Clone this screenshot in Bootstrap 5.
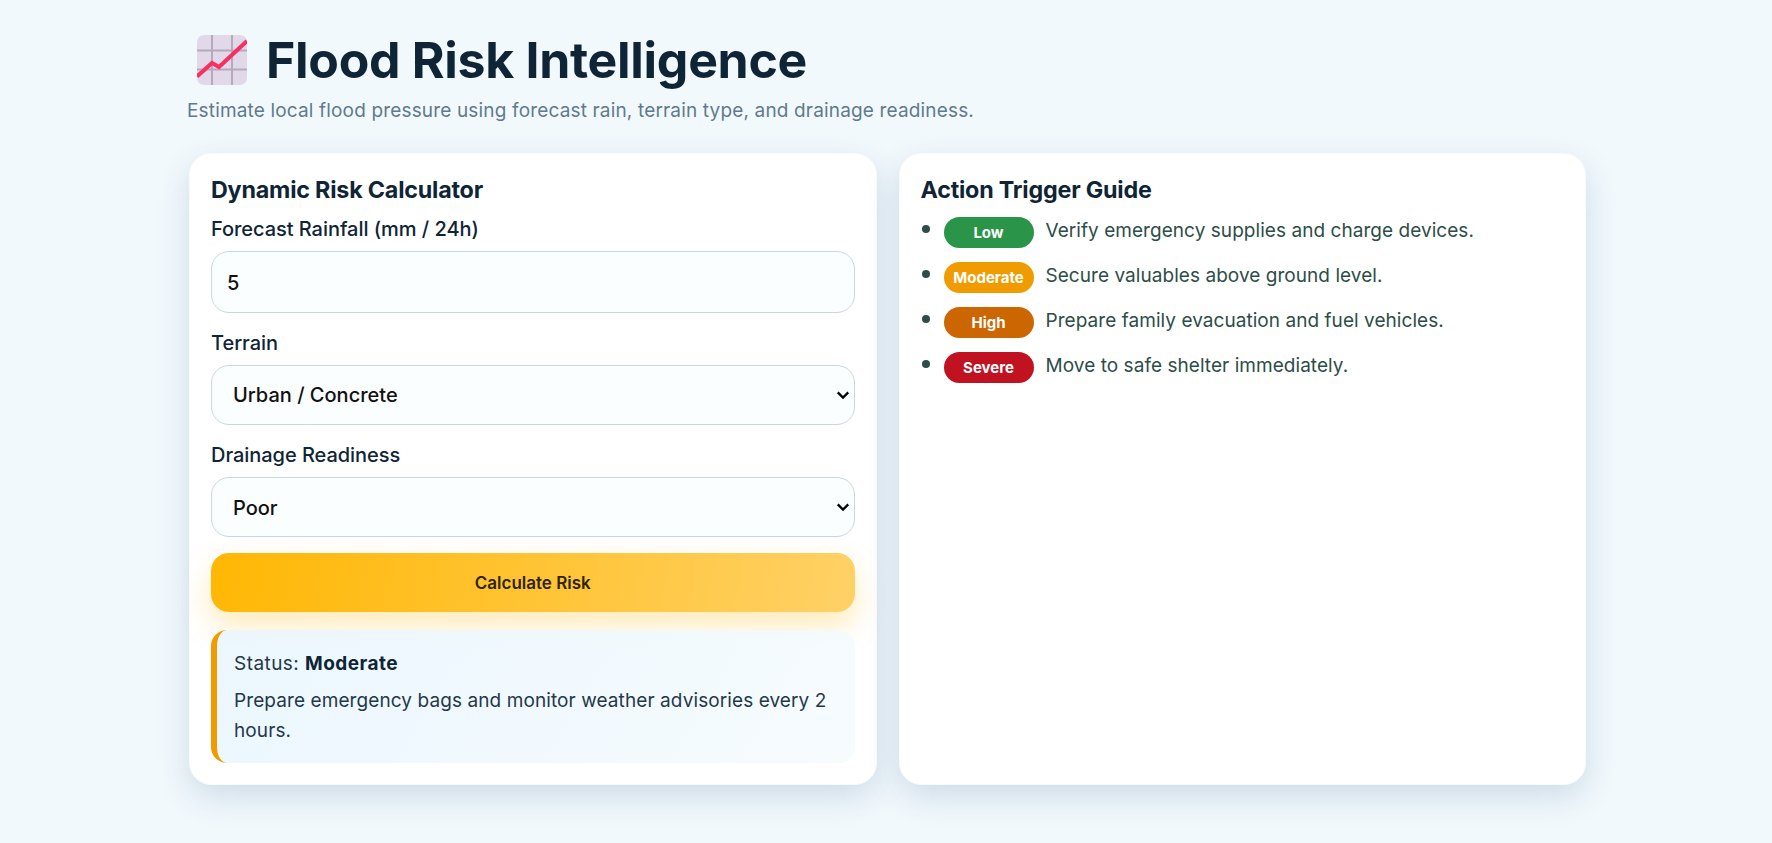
<!doctype html>
<html lang="en"><head><meta charset="utf-8"><title>Flood Risk Intelligence</title>
<link href="https://cdn.jsdelivr.net/npm/bootstrap@5.3.0/dist/css/bootstrap.min.css" rel="stylesheet">
<style>
html,body{height:100%}
body{font-family:Inter,"Noto Sans",sans-serif;color:#0f2536;background:#f2f9fd;overflow:hidden}
.shell{width:1400px;margin:0 auto;padding-top:26px}
.hero-title{font-size:50px;font-weight:700;line-height:68px;color:#0f2536;margin:0;letter-spacing:-.3px;padding-left:11px;gap:19px}
.hero-sub{font-size:19px;line-height:28px;color:#5f7a8e;margin:3px 0 28px 1px;letter-spacing:.16px}
.panels{gap:22px;padding-left:3px}
.panel{width:688px;height:632px;background:#fff;border-radius:22px;padding:21px;box-shadow:0 12px 32px rgba(20,70,110,.16);border:1px solid #f8fbfd}
.panel-title{font-size:23.3px;font-weight:700;line-height:30px;margin:0 0 10px;color:#0f2536;letter-spacing:-.2px}
.fld-label{font-size:20px;font-weight:500;line-height:28px;margin-bottom:8px;color:#0f2536;letter-spacing:-.05px}
.fld{height:60px;border:1px solid #c9d8dc;border-radius:18px;background-color:#fbfefe;font-size:20px;font-weight:500;color:#111;padding:1px 15px 0}
input.fld{height:62px}
select.fld{padding:0 24px 0 17px;background-image:url("data:image/svg+xml,%3csvg xmlns='http://www.w3.org/2000/svg' viewBox='0 0 16 16'%3e%3cpath fill='none' stroke='%23000' stroke-width='2.6' d='M2 5l6 6 6-6'/%3e%3c/svg%3e");background-position:right 4px center;background-size:14px 14px}
#t,#d{padding-left:21px}
#d{padding-top:1px}
.mb-fld{margin-bottom:16px}
.calc-btn{height:59px;width:100%;border:0;border-radius:18px;background:linear-gradient(100deg,#ffb703,#ffd166);font-size:17px;font-weight:600;color:#2f2408;box-shadow:0 14px 30px rgba(255,183,3,.28);margin-bottom:18px;padding-top:8px}
.status-box{height:133px;border-left:6px solid #f09c00;border-radius:16px;background:linear-gradient(120deg,rgba(232,245,254,.85),rgba(245,251,254,.9));padding:19px 17px 0;font-size:19px;line-height:30px;color:#24384a;letter-spacing:.09px;position:relative}
.status-box p{margin:0}.status-box .st{margin-bottom:7px;letter-spacing:.45px}.status-box b{font-weight:700;color:#0f2536;letter-spacing:.45px}
.guide{margin:0;padding:0;color:#2d4d48;font-size:19px;letter-spacing:.05px}
.guide li{height:45px;line-height:32px}
.guide li::before{content:"";flex:none;width:8px;height:8px;border-radius:50%;background:#2d4d48;margin:10px 14px 0 1px}
.lvl{flex:none;width:90px;height:31px;line-height:31px;border-radius:16px;text-align:center;font-size:15px;font-weight:700;color:#fff;margin:2px 12px 0 0;letter-spacing:0}
.lvl-low{background:#2a9448}.lvl-mod{background:#f09c00}.lvl-high{background:#cc6600}.lvl-sev{background:#c11221}
</style></head><body>
<div class="shell">
<h1 class="hero-title d-flex align-items-center">
<svg width="50" height="50" viewBox="0 0 50 50" aria-hidden="true"><rect width="50" height="50" rx="7" fill="#e1d9ea"/><path d="M15 0V50M35 0V50M0 15.500H50M0 34.500H50" stroke="#b5aabc" stroke-width="2"/><path d="M0 41.500L15 28L22 32L50 6" fill="none" stroke="#f92f60" stroke-width="4"/></svg>
<span>Flood Risk Intelligence</span></h1>
<p class="hero-sub">Estimate local flood pressure using forecast rain, terrain type, and drainage readiness.</p>
<div class="panels d-flex">
<section class="panel">
<h2 class="panel-title">Dynamic Risk Calculator</h2>
<form onsubmit="return false">
<div class="mb-fld"><label class="form-label fld-label d-block" for="r">Forecast Rainfall (mm / 24h)</label><input id="r" class="form-control fld" type="number" value="5"></div>
<div class="mb-fld"><label class="form-label fld-label d-block" for="t">Terrain</label><select id="t" class="form-select fld"><option>Urban / Concrete</option></select></div>
<div class="mb-fld"><label class="form-label fld-label d-block" for="d">Drainage Readiness</label><select id="d" class="form-select fld"><option>Poor</option></select></div>
<button class="btn calc-btn" type="button">Calculate Risk</button>
</form>
<div class="status-box"><p class="st">Status: <b>Moderate</b></p><p>Prepare emergency bags and monitor weather advisories every 2 hours.</p></div>
</section>
<section class="panel">
<h2 class="panel-title">Action Trigger Guide</h2>
<ul class="guide list-unstyled">
<li class="d-flex"><span class="lvl lvl-low">Low</span><span>Verify emergency supplies and charge devices.</span></li>
<li class="d-flex"><span class="lvl lvl-mod">Moderate</span><span>Secure valuables above ground level.</span></li>
<li class="d-flex"><span class="lvl lvl-high">High</span><span>Prepare family evacuation and fuel vehicles.</span></li>
<li class="d-flex"><span class="lvl lvl-sev">Severe</span><span>Move to safe shelter immediately.</span></li>
</ul>
</section>
</div></div>
</body></html>
